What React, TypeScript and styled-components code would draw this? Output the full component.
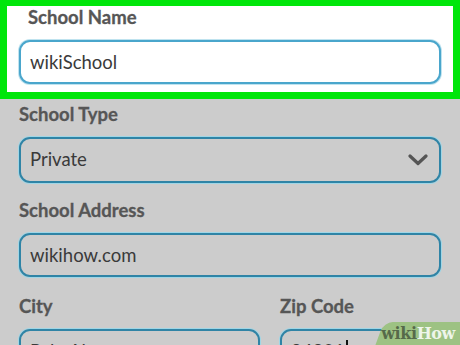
import React from "react";
import styled, { createGlobalStyle } from "styled-components";

const Global = createGlobalStyle`
  html, body { margin: 0; padding: 0; }
  body {
    background: #cccccc;
    font-family: "Lato", "Noto Sans", sans-serif;
    overflow: hidden;
  }
  * { box-sizing: border-box; }
`;

const Page = styled.div`
  position: relative;
  width: 460px;
  height: 345px;
  overflow: hidden;
  padding: 0 19px;
  display: flex;
  flex-direction: column;
`;

const Highlight = styled.div`
  margin: 0 -19px;
  border: 7px solid #00e60a;
  border-top-width: 6px;
  background: #ffffff;
  padding: 1px 12px 8px;
  display: flex;
  flex-direction: column;
  gap: 13px;
`;

const Field = styled.div<{ $mt?: number }>`
  display: flex;
  flex-direction: column;
  gap: 13px;
  margin-top: ${(p) => p.$mt ?? 0}px;
  min-width: 0;
`;

const Label = styled.div<{ $indent?: number }>`
  font-weight: 700;
  font-size: 18.5px;
  line-height: 20px;
  color: #565656;
  padding-left: ${(p) => p.$indent ?? 0}px;
  -webkit-text-stroke: 0.3px #565656;
`;

const Box = styled.div<{ $light?: boolean; $h?: number }>`
  height: ${(p) => p.$h ?? 45}px;
  border-radius: 11px;
  border: 2px solid ${(p) => (p.$light ? "#4aa6cc" : "#2f84a6")};
  box-shadow: 0 0 0 1px ${(p) => (p.$light ? "#bfe3ef" : "#9fd6e6")};
  background: ${(p) => (p.$light ? "#ffffff" : "transparent")};
  display: flex;
  align-items: flex-start;
  justify-content: space-between;
  padding: 9px 10px 0 9px;
  font-size: 18.5px;
  line-height: 22px;
  color: #3a3a3a;
  white-space: nowrap;
`;

const Chevron = styled.svg`
  width: 20px;
  height: 12px;
  margin-top: 6px;
  margin-right: 1px;
`;

const Row = styled.div`
  display: grid;
  grid-template-columns: 241px 1fr;
  gap: 20px;
  margin-top: 19px;
`;

const Caret = styled.span`
  display: inline-block;
  width: 2px;
  height: 22px;
  background: #111;
  vertical-align: top;
  margin-left: 1px;
`;

const Watermark = styled.div`
  position: absolute;
  right: -14px;
  bottom: -4px;
  width: 100px;
  height: 27px;
  background: #9dc283;
  border-radius: 9px 0 0 0;
  transform: skewX(-20deg);
  transform-origin: bottom left;
`;

const Mark = styled.div`
  position: absolute;
  right: 5px;
  bottom: 2px;
  font-family: "DejaVu Serif", "Liberation Serif", serif;
  font-weight: 700;
  font-size: 16px;
  line-height: 18px;
  letter-spacing: -0.4px;
`;

const Wiki = styled.span`
  color: #566a4a;
`;
const How = styled.span`
  color: #eef5ea;
`;

export default function App() {
  return (
    <>
      <Global />
      <Page>
        <Highlight>
          <Label $indent={9}>School Name</Label>
          <Box $light $h={44}>wikiSchool</Box>
        </Highlight>
        <Field $mt={5}>
          <Label>School Type</Label>
          <Box $h={46}>
            Private
            <Chevron viewBox="0 0 20 12">
              <polyline
                points="2,2 10,9.5 18,2"
                fill="none"
                stroke="#555555"
                strokeWidth="3.2"
                strokeLinecap="round"
                strokeLinejoin="round"
              />
            </Chevron>
          </Box>
        </Field>
        <Field $mt={17}>
          <Label>School Address</Label>
          <Box $h={44}>wikihow.com</Box>
        </Field>
        <Row>
          <Field>
            <Label>City</Label>
            <Box>Palo Alto</Box>
          </Field>
          <Field>
            <Label>Zip Code</Label>
            <Box>
              <span>
                94301
                <Caret />
              </span>
            </Box>
          </Field>
        </Row>
        <Watermark />
        <Mark>
          <Wiki>wiki</Wiki>
          <How>How</How>
        </Mark>
      </Page>
    </>
  );
}
